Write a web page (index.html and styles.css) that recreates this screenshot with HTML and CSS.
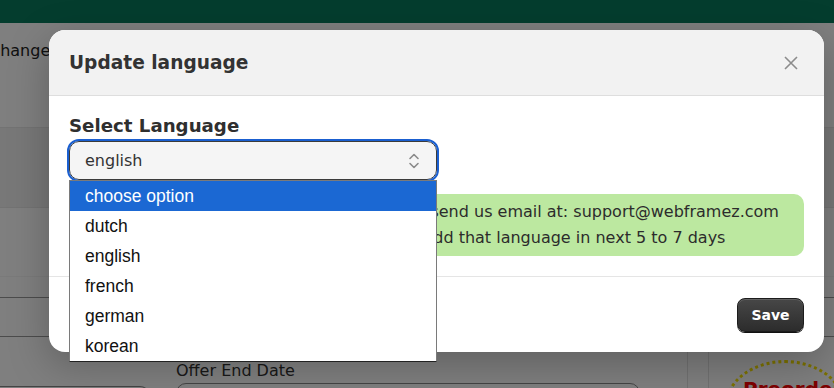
FILE: index.html
```html
<!DOCTYPE html>
<html>
<head>
<meta charset="utf-8">
<link rel="stylesheet" href="styles.css">
</head>
<body>
<div class="page">
  <header class="topbar"><div class="topbar-inner"><span class="topbar-title">Preorder Button: Blend in the store</span></div></header>
  <div class="toolbar"><span class="changes">Changes:</span></div>
  <div class="band"></div>
  <div class="section">
    <div class="row-line"></div>
    <div class="input-row"></div>
  </div>
  <div class="bottom">
    <div class="bottom-left">
      <div class="field-col first"><div class="fake-input short"></div></div>
      <div class="field-col second">
        <span class="field-label">Offer End Date</span>
        <div class="fake-input"></div>
      </div>
    </div>
    <div class="bottom-right">
      <div class="panel">
        <div class="badge"><span>Preorder</span></div>
      </div>
    </div>
  </div>
</div>

<div class="overlay"></div>

<div class="modal">
  <div class="modal-header">
    <h2 class="modal-title">Update language</h2>
    <svg class="close" width="16" height="16" viewBox="0 0 16 16"><path d="M2 2L14 14M14 2L2 14" stroke="#8c8c8c" stroke-width="1.6" fill="none"/></svg>
  </div>
  <div class="modal-body">
    <label class="label">Select Language</label>
    <div class="select">
      <span>english</span>
      <svg class="chev" width="12" height="18" viewBox="0 0 12 18"><path d="M2 6.5L6 2.5L10 6.5M2 11.5L6 15.5L10 11.5" stroke="#8a8a8a" stroke-width="1.6" fill="none" stroke-linecap="round" stroke-linejoin="round"/></svg>
    </div>
    <div class="alert">
      <div><span class="lead-one">If your language is not in the list, please </span>send us email at: support@webframez.com</div>
      <div><span class="lead-two">After we receive your request, our team will </span>add that language in next 5 to 7 days</div>
    </div>
    <ul class="dropdown">
      <li class="opt selected">choose option</li>
      <li class="opt">dutch</li>
      <li class="opt">english</li>
      <li class="opt">french</li>
      <li class="opt">german</li>
      <li class="opt">korean</li>
    </ul>
  </div>
  <div class="modal-footer">
    <button class="save">Save</button>
  </div>
</div>
</body>
</html>
```
FILE: styles.css
```css
* { box-sizing: border-box; }
html, body { margin: 0; padding: 0; }
body {
  width: 834px;
  height: 388px;
  overflow: hidden;
  position: relative;
  background: #fff;
  font-family: "DejaVu Sans", Verdana, sans-serif;
  color: #333;
}
.page {
  display: flex;
  flex-direction: column;
  height: 388px;
  overflow: hidden;
}
.page > * { flex-shrink: 0; }
.topbar {
  height: 23px;
  background: #087b5d;
  overflow: hidden;
}
.topbar-inner {
  width: 146px;
  display: flex;
  justify-content: flex-end;
  margin-top: -21px;
}
.topbar-title {
  flex-shrink: 0;
  white-space: nowrap;
  color: #fff;
  font-weight: 700;
  font-size: 22px;
  line-height: 26px;
}
.toolbar {
  height: 104px;
  padding-top: 18px;
  margin-left: -11px;
  font-size: 16px;
  color: #222;
}
.band {
  height: 81px;
  background: #f0f0f0;
  border-top: 1px solid #e6e6e6;
  border-bottom: 1px solid #e6e6e6;
}
.section {
  height: 130px;
  display: flex;
  flex-direction: column;
}
.row-line {
  height: 69px;
  border-bottom: 1px solid #f4f4f4;
}
.input-row {
  height: 40px;
  margin-top: 20px;
  border-top: 1px solid #999;
  border-bottom: 1px solid #999;
}
.bottom {
  display: flex;
  flex: 1 0 auto;
}
.bottom-left {
  display: flex;
  flex-shrink: 0;
  gap: 26px;
  width: 687px;
  padding-top: 24px;
}
.field-col {
  display: flex;
  flex-direction: column;
}
.field-col.first { width: 150px; padding-top: 21px; }
.field-col.second { width: 464px; }
.field-label {
  font-size: 16px;
  line-height: 18px;
  color: #333;
}
.fake-input {
  height: 40px;
  border: 1px solid #888;
  border-radius: 10px;
  margin-top: 3px;
}
.fake-input.short { border-left: none; border-top-left-radius: 0; border-bottom-left-radius: 0; }
.bottom-right {
  flex: 1;
  min-width: 0;
  border-left: 1px solid #e2e2e2;
  padding-left: 20px;
}
.panel {
  height: 100%;
  border-left: 1px solid #e2e2e2;
  padding: 22px 0 0 16px;
}
.badge {
  width: 120px;
  height: 90px;
  border-radius: 50%;
  border: 3px dotted #f7e200;
  padding: 14px 0 0 15px;
  white-space: nowrap;
}
.badge span {
  color: #ff0000;
  font-weight: 700;
  font-size: 20px;
  line-height: 24px;
}
.overlay {
  position: absolute;
  inset: 0;
  background: rgba(0, 0, 0, 0.5);
}
.modal {
  position: absolute;
  left: 49px;
  top: 30px;
  width: 775px;
  height: 322px;
  background: #fff;
  border-radius: 16px;
  box-shadow: 0 12px 40px rgba(0, 0, 0, 0.25);
  display: flex;
  flex-direction: column;
}
.modal-header {
  height: 66px;
  background: #f2f2f2;
  border-bottom: 1px solid #dedede;
  border-radius: 16px 16px 0 0;
  display: flex;
  align-items: center;
  justify-content: space-between;
  padding: 0 25px 0 20px;
}
.modal-title {
  margin: 0;
  font-size: 18.6px;
  font-weight: 700;
  color: #333;
}
.close { display: block; }
.modal-body {
  position: relative;
  padding: 18px 20px 20px 20px;
  display: flex;
  flex-direction: column;
  border-bottom: 1px solid #e5e5e5;
}
.label {
  font-size: 18.2px;
  font-weight: 700;
  line-height: 24px;
  color: #2f2f2f;
}
.select {
  margin-top: 3px;
  width: 368px;
  height: 39px;
  background: #f5f5f5;
  border: 1px solid #3b3b3b;
  border-radius: 10px;
  outline: 2px solid #1a5fd0;
  outline-offset: 0;
  display: flex;
  align-items: center;
  justify-content: space-between;
  padding: 0 16px 0 15px;
  font-size: 16px;
  color: #333;
}
.chev { display: block; }
.alert {
  margin-top: 14px;
  background: #bce8a0;
  border-radius: 10px;
  padding: 5px 16px;
  font-size: 16px;
  line-height: 26px;
  color: #2c2c2c;
  white-space: nowrap;
  overflow: hidden;
}
.lead-one { word-spacing: 2px; }
.lead-two { word-spacing: -2.3px; }
.dropdown {
  position: absolute;
  left: 20px;
  top: 84px;
  width: 368px;
  margin: 0;
  padding: 0;
  list-style: none;
  background: #fff;
  border: 1px solid #7a7a7a;
  border-bottom-color: #222;
  font-family: "Liberation Sans", Arial, sans-serif;
  font-size: 17.5px;
  color: #111;
  z-index: 2;
}
.opt {
  height: 30px;
  line-height: 30px;
  padding-left: 15px;
}
.opt.selected {
  background: #1b68d3;
  color: #fff;
}
.modal-footer {
  flex: 1;
  display: flex;
  align-items: center;
  justify-content: flex-end;
  padding: 0 20px;
}
.save {
  width: 67px;
  height: 34px;
  border-radius: 8px;
  border: 1px solid #1c1c1c;
  background: linear-gradient(#474747, #2c2c2c);
  box-shadow: inset 0 1px 0 rgba(255,255,255,0.15), 0 1px 0 #111;
  color: #fff;
  font-family: "DejaVu Sans", sans-serif;
  font-weight: 700;
  font-size: 14px;
}
```
